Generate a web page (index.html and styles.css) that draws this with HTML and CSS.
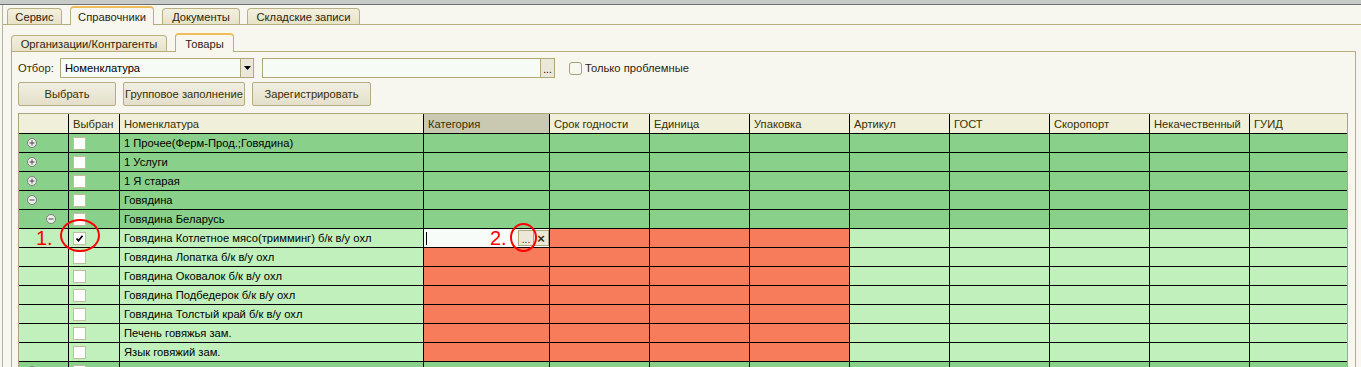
FILE: index.html
```html
<!DOCTYPE html>
<html lang="ru">

<head>
    <meta charset="UTF-8">
    <title>Справочники</title>
    <link rel="stylesheet" href="styles.css">
</head>

<body>
    <div class="titlebar"></div>

    <div class="window">
        <div class="tabs main-tabs">
            <div class="tab tab-service">Сервис</div>
            <div class="tab tab-refs active">Справочники</div>
            <div class="tab tab-docs">Документы</div>
            <div class="tab tab-store">Складские записи</div>
        </div>

        <div class="tabs sub-tabs">
            <div class="tab tab-orgs">Организации/Контрагенты</div>
            <div class="tab tab-goods active">Товары</div>
        </div>

        <div class="panel">
            <div class="filter">
                <span class="filter-label">Отбор:</span>
                <div class="combo">
                    <span class="combo-text">Номенклатура</span>
                    <span class="combo-btn"><svg width="7" height="4" viewBox="0 0 7 4"><path d="M0 0h7L3.5 4z" fill="#000"/></svg></span>
                </div>
                <div class="field">
                    <span class="field-text"></span>
                    <span class="field-btn">...</span>
                </div>
                <label class="check-label"><span class="round-box"></span>Только проблемные</label>
            </div>

            <div class="actions">
                <div class="btn btn-pick">Выбрать</div>
                <div class="btn btn-group">Групповое заполнение</div>
                <div class="btn btn-reg">Зарегистрировать</div>
            </div>

            <div class="grid">
                <div class="row head">
                    <div class="cell"></div>
                    <div class="cell">Выбран</div>
                    <div class="cell">Номенклатура</div>
                    <div class="cell sorted">Категория</div>
                    <div class="cell">Срок годности</div>
                    <div class="cell">Единица</div>
                    <div class="cell">Упаковка</div>
                    <div class="cell">Артикул</div>
                    <div class="cell">ГОСТ</div>
                    <div class="cell">Скоропорт</div>
                    <div class="cell">Некачественный</div>
                    <div class="cell">ГУИД</div>
                </div>

                <div class="row dark">
                    <div class="cell tree"><svg class="exp" viewBox="0 0 10 10"><circle cx="5" cy="5" r="4.5" fill="#eeeeea" stroke="#7c7c7a"/><path d="M2.5 5h5M5 2.5v5" stroke="#4a4a4a"/></svg></div>
                    <div class="cell"><span class="box"></span></div>
                    <div class="cell">1 Прочее(Ферм-Прод.;Говядина)</div>
                    <div class="cell"></div><div class="cell"></div><div class="cell"></div><div class="cell"></div>
                    <div class="cell"></div><div class="cell"></div><div class="cell"></div><div class="cell"></div><div class="cell"></div>
                </div>
                <div class="row dark">
                    <div class="cell tree"><svg class="exp" viewBox="0 0 10 10"><circle cx="5" cy="5" r="4.5" fill="#eeeeea" stroke="#7c7c7a"/><path d="M2.5 5h5M5 2.5v5" stroke="#4a4a4a"/></svg></div>
                    <div class="cell"><span class="box"></span></div>
                    <div class="cell">1 Услуги</div>
                    <div class="cell"></div><div class="cell"></div><div class="cell"></div><div class="cell"></div>
                    <div class="cell"></div><div class="cell"></div><div class="cell"></div><div class="cell"></div><div class="cell"></div>
                </div>
                <div class="row dark">
                    <div class="cell tree"><svg class="exp" viewBox="0 0 10 10"><circle cx="5" cy="5" r="4.5" fill="#eeeeea" stroke="#7c7c7a"/><path d="M2.5 5h5M5 2.5v5" stroke="#4a4a4a"/></svg></div>
                    <div class="cell"><span class="box"></span></div>
                    <div class="cell">1 Я старая</div>
                    <div class="cell"></div><div class="cell"></div><div class="cell"></div><div class="cell"></div>
                    <div class="cell"></div><div class="cell"></div><div class="cell"></div><div class="cell"></div><div class="cell"></div>
                </div>
                <div class="row dark">
                    <div class="cell tree"><svg class="exp" viewBox="0 0 10 10"><circle cx="5" cy="5" r="4.5" fill="#eeeeea" stroke="#7c7c7a"/><path d="M2.5 5h5" stroke="#4a4a4a"/></svg></div>
                    <div class="cell"><span class="box"></span></div>
                    <div class="cell">Говядина</div>
                    <div class="cell"></div><div class="cell"></div><div class="cell"></div><div class="cell"></div>
                    <div class="cell"></div><div class="cell"></div><div class="cell"></div><div class="cell"></div><div class="cell"></div>
                </div>
                <div class="row dark">
                    <div class="cell tree"><svg class="exp sub" viewBox="0 0 10 10"><circle cx="5" cy="5" r="4.5" fill="#eeeeea" stroke="#7c7c7a"/><path d="M2.5 5h5" stroke="#4a4a4a"/></svg></div>
                    <div class="cell"><span class="box"></span></div>
                    <div class="cell">Говядина Беларусь</div>
                    <div class="cell"></div><div class="cell"></div><div class="cell"></div><div class="cell"></div>
                    <div class="cell"></div><div class="cell"></div><div class="cell"></div><div class="cell"></div><div class="cell"></div>
                </div>
                <div class="row light">
                    <div class="cell tree"></div>
                    <div class="cell"><span class="box"><svg width="11" height="11" viewBox="0 0 11 11"><path d="M2.5 5.5l2 2.2 4-5" fill="none" stroke="#000" stroke-width="1.8"/></svg></span></div>
                    <div class="cell">Говядина Котлетное мясо(тримминг) б/к в/у охл</div>
                    <div class="cell edit">
                        <span class="caret"></span>
                        <span class="edit-btn">...</span>
                        <span class="edit-btn clear">×</span>
                    </div>
                    <div class="cell bad"></div><div class="cell bad"></div><div class="cell bad"></div>
                    <div class="cell"></div><div class="cell"></div><div class="cell"></div><div class="cell"></div><div class="cell"></div>
                </div>
                <div class="row light">
                    <div class="cell tree"></div>
                    <div class="cell"><span class="box"></span></div>
                    <div class="cell">Говядина Лопатка б/к в/у охл</div>
                    <div class="cell bad"></div><div class="cell bad"></div><div class="cell bad"></div><div class="cell bad"></div>
                    <div class="cell"></div><div class="cell"></div><div class="cell"></div><div class="cell"></div><div class="cell"></div>
                </div>
                <div class="row light">
                    <div class="cell tree"></div>
                    <div class="cell"><span class="box"></span></div>
                    <div class="cell">Говядина Оковалок б/к в/у охл</div>
                    <div class="cell bad"></div><div class="cell bad"></div><div class="cell bad"></div><div class="cell bad"></div>
                    <div class="cell"></div><div class="cell"></div><div class="cell"></div><div class="cell"></div><div class="cell"></div>
                </div>
                <div class="row light">
                    <div class="cell tree"></div>
                    <div class="cell"><span class="box"></span></div>
                    <div class="cell">Говядина Подбедерок б/к в/у охл</div>
                    <div class="cell bad"></div><div class="cell bad"></div><div class="cell bad"></div><div class="cell bad"></div>
                    <div class="cell"></div><div class="cell"></div><div class="cell"></div><div class="cell"></div><div class="cell"></div>
                </div>
                <div class="row light">
                    <div class="cell tree"></div>
                    <div class="cell"><span class="box"></span></div>
                    <div class="cell">Говядина Толстый край б/к в/у охл</div>
                    <div class="cell bad"></div><div class="cell bad"></div><div class="cell bad"></div><div class="cell bad"></div>
                    <div class="cell"></div><div class="cell"></div><div class="cell"></div><div class="cell"></div><div class="cell"></div>
                </div>
                <div class="row light">
                    <div class="cell tree"></div>
                    <div class="cell"><span class="box"></span></div>
                    <div class="cell">Печень говяжья зам.</div>
                    <div class="cell bad"></div><div class="cell bad"></div><div class="cell bad"></div><div class="cell bad"></div>
                    <div class="cell"></div><div class="cell"></div><div class="cell"></div><div class="cell"></div><div class="cell"></div>
                </div>
                <div class="row light">
                    <div class="cell tree"></div>
                    <div class="cell"><span class="box"></span></div>
                    <div class="cell">Язык говяжий зам.</div>
                    <div class="cell bad"></div><div class="cell bad"></div><div class="cell bad"></div><div class="cell bad"></div>
                    <div class="cell"></div><div class="cell"></div><div class="cell"></div><div class="cell"></div><div class="cell"></div>
                </div>
                <div class="row dark">
                    <div class="cell tree"><svg class="exp" viewBox="0 0 10 10"><circle cx="5" cy="5" r="4.5" fill="#eeeeea" stroke="#7c7c7a"/><path d="M2.5 5h5M5 2.5v5" stroke="#4a4a4a"/></svg></div>
                    <div class="cell"><span class="box"></span></div>
                    <div class="cell"></div>
                    <div class="cell"></div><div class="cell"></div><div class="cell"></div><div class="cell"></div>
                    <div class="cell"></div><div class="cell"></div><div class="cell"></div><div class="cell"></div><div class="cell"></div>
                </div>

                <!-- red annotations drawn over the grid -->
                <span class="mark mark-one">1.</span>
                <span class="ring ring-one"></span>
                <span class="mark mark-two">2.</span>
                <span class="ring ring-two"></span>
            </div>
        </div>
    </div>
</body>

</html>
```

FILE: styles.css
```css
* {
    box-sizing: border-box;
    margin: 0;
    padding: 0;
}

body {
    font-family: 'Liberation Sans', Arial, sans-serif;
    font-size: 11.2px;
    background-color: #f8f7ef;
    color: #3a2f00;
    width: 1361px;
    height: 367px;
    overflow: hidden;
}

.titlebar {
    height: 5px;
    background: #c6cbc7;
    border-bottom: 1px solid #6e6e6e;
}

.window {
    margin-left: 2px;
    border-left: 1px solid #b6b2a2;
    height: 362px;
}

/* tabs */
.tabs {
    display: flex;
    align-items: flex-end;
    border-bottom: 1px solid #b5ad7c;
}

.main-tabs {
    height: 20px;
    padding-left: 4px;
}

.sub-tabs {
    height: 19px;
    margin: 8px 5px 0 8px;
}

.tab {
    display: flex;
    align-items: center;
    justify-content: center;
    height: 16px;
    border: 1px solid #b8b084;
    border-bottom: none;
    border-radius: 4px 4px 0 0;
    background: linear-gradient(#f3f0df, #e7e3c8);
    color: #2c2410;
    white-space: nowrap;
}

.tab.active {
    height: 19px;
    margin-bottom: -1px;
    background: #f8f7ef;
    border-top: 2px solid #efbd5c;
    position: relative;
}

.tab-service { width: 55px; }
.tab-refs { width: 84px; margin-left: 8px; }
.tab-docs { width: 78px; margin-left: 8px; }
.tab-store { width: 113px; margin-left: 7px; }
.tab-orgs { width: 156px; }
.tab-goods { width: 59px; margin-left: 8px; }

.panel {
    margin: 0 5px 0 8px;
    border: 1px solid #b5ad7c;
    border-top: none;
    padding: 6px 6px 0 6px;
    height: 320px;
}

/* filter line */
.filter {
    display: flex;
    align-items: center;
    height: 20px;
}

.filter-label {
    width: 42px;
}

.combo,
.field {
    display: flex;
    height: 20px;
    border: 1px solid #b0a878;
    background: #f6fbf6;
}

.combo {
    width: 194px;
}

.field {
    width: 293px;
    margin-left: 8px;
}

.combo-text,
.field-text {
    flex: 1;
    display: flex;
    align-items: center;
    padding-left: 4px;
    color: #000;
}

.combo-btn,
.field-btn {
    width: 13px;
    display: flex;
    align-items: center;
    justify-content: center;
    border-left: 1px solid #b0a878;
    background: #ebe8d9;
    color: #000;
}

.field-btn {
    width: 14px;
    font-size: 10px;
    padding-top: 2px;
}

.check-label {
    display: flex;
    align-items: center;
    margin-left: 14px;
    color: #2c2410;
}

.round-box {
    width: 13px;
    height: 13px;
    border: 1px solid #a8a078;
    border-radius: 3px;
    background: #f8f8f2;
    margin-right: 3px;
}

/* buttons */
.actions {
    display: flex;
    margin-top: 4px;
}

.btn {
    height: 24px;
    display: flex;
    align-items: center;
    justify-content: center;
    border: 1px solid #b4ac84;
    border-radius: 2px;
    background: linear-gradient(#f1efe2, #e3dfca);
    color: #3a2f00;
    white-space: nowrap;
}

.btn-pick { width: 98px; }
.btn-group { width: 122px; margin-left: 7px; }
.btn-reg { width: 119px; margin-left: 7px; }

/* grid */
.grid {
    position: relative;
    width: 1330px;
    margin-top: 7px;
    border: 1px solid #aca47c;
    border-bottom: none;
}

.row {
    display: grid;
    grid-template-columns: 50px 51px 304px 126px repeat(7, 100px) 97px;
    height: 19px;
    border-bottom: 1px solid #000;
    color: #000;
}

.row.head {
    height: 20px;
    background: #f0efda;
    color: #3a2f00;
}

.row.dark {
    background: #89d08a;
}

.row.light {
    background: #c1f0bc;
}

.cell {
    display: flex;
    align-items: center;
    padding-left: 4px;
    border-right: 1px solid #000;
    white-space: nowrap;
    overflow: hidden;
}

.cell:last-child {
    border-right: none;
}

.cell.sorted {
    background: #c9c9b1;
}

.cell.bad {
    background: #f77c5b;
}

.cell.tree {
    padding-left: 0;
}

.exp {
    width: 10px;
    height: 10px;
    margin-left: 8px;
}

.exp.sub {
    margin-left: 27px;
}

.box {
    width: 13px;
    height: 13px;
    border: 1px solid #c4bc9c;
    background: #fff;
    display: flex;
    align-items: center;
    justify-content: center;
}

.cell.edit {
    background: #f8fcf8;
    padding-left: 2px;
}

.caret {
    width: 1px;
    height: 13px;
    background: #000;
    margin-right: auto;
}

.edit-btn {
    width: 16px;
    height: 16px;
    display: flex;
    align-items: center;
    justify-content: center;
    border: 1px solid #b0a880;
    background: #ebe8d8;
    color: #3a2f00;
    font-size: 10px;
    padding-top: 3px;
}

.edit-btn.clear {
    width: 15px;
    font-size: 13px;
    font-weight: bold;
    padding-top: 0;
    border-left: none;
}

/* annotations */
.mark {
    position: absolute;
    color: #f00;
    font-size: 20px;
    line-height: 20px;
}

.mark-one { left: 17px; top: 114px; }
.mark-two { left: 471px; top: 114px; }

.ring {
    position: absolute;
    border: 2px solid #f00;
    border-radius: 50%;
}

.ring-one { left: 41px; top: 105px; width: 40px; height: 33px; }
.ring-two { left: 491px; top: 109px; width: 27px; height: 29px; }
```
